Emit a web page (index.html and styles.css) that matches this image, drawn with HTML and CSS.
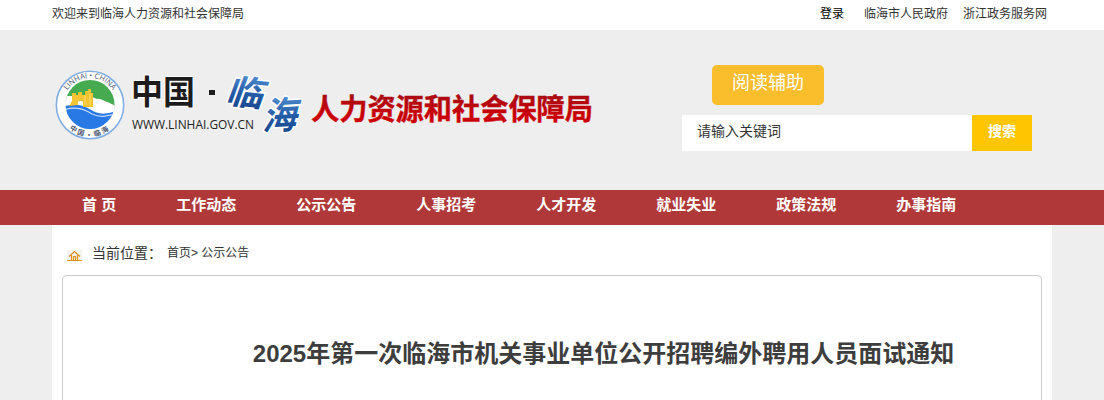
FILE: index.html
```html
<!DOCTYPE html>
<html lang="zh-CN">
<head>
  <meta charset="UTF-8">
  <title>2025年第一次临海市机关事业单位公开招聘编外聘用人员面试通知</title>
  <link rel="stylesheet" href="styles.css">
</head>
<body>
  <div class="topbar">
    <div class="wrap topbar-in">
      <span class="welcome">欢迎来到临海人力资源和社会保障局</span>
      <a class="login" href="#">登录</a>
      <a href="#">临海市人民政府</a>
      <a href="#">浙江政务服务网</a>
    </div>
  </div>

  <div class="header">
    <div class="wrap header-in">
      <svg class="logo" width="560" height="90" viewBox="0 0 560 90">
        <defs>
          <linearGradient id="brush" x1="0" y1="0" x2="0" y2="1">
            <stop offset="0.1" stop-color="#5b9bd9"/>
            <stop offset="0.55" stop-color="#245da8"/>
            <stop offset="1" stop-color="#123f84"/>
          </linearGradient>
          <linearGradient id="red" x1="0" y1="0" x2="0" y2="1">
            <stop offset="0.2" stop-color="#a80d12"/>
            <stop offset="0.7" stop-color="#cb0005"/>
          </linearGradient>
          <clipPath id="disc"><circle cx="38" cy="44.5" r="24.5"/></clipPath>
          <path id="arcTop" d="M11 45a27 27 0 0 1 54 0"/>
          <path id="arcBottom" d="M6.5 45a31.5 31.5 0 0 0 63 0"/>
        </defs>

        <!-- emblem -->
        <circle cx="38" cy="45" r="33.7" fill="#fff" stroke="#83aee4" stroke-width="1.6"/>
        <g clip-path="url(#disc)">
          <path d="M10 18h56v32c-9-3-17-2-23-8-9-5-20 2-33-1z" fill="#46aa50"/>
          <path d="M34 39c5-4 8-1 11 0 4-1 6 2 10 3s5 3 10 4v9H34z" fill="#fff"/>
          <path d="M10 36h10v12H10z" fill="#fff"/>
          <path d="M10 47c15-5 23-1 31 4 8 4 15 3 23 0v20H10z" fill="#2878e6"/>
          <path d="M10 50c15-4 22-1 30 4 9 4 15 2 23 0" fill="none" stroke="#c5dcfb" stroke-width="1.2"/>
        </g>
        <path d="M20 33h4v2h2v-3h4v3h3v-4h3v-2h3v4h2v14H31v-5q-3-3-5 0v3l-9 1 3-5z" fill="#f4c432"/>
        <path d="M33 36v9M38 34v11" stroke="#fbe06c" stroke-width="1"/>
        <text class="ring" text-anchor="middle"><textPath href="#arcTop" startOffset="50%">LINHAI • CHINA</textPath></text>
        <text class="ring ring-cn" text-anchor="middle"><textPath href="#arcBottom" startOffset="50%">中国·临海</textPath></text>

        <text class="china" x="79" y="44" textLength="64" lengthAdjust="spacingAndGlyphs">中国</text>
        <rect x="157" y="30" width="6" height="5" fill="#1c1c1c"/>
        <text class="site" x="80" y="69" textLength="122" lengthAdjust="spacingAndGlyphs">WWW.LINHAI.GOV.CN</text>
        <g class="brush">
          <text transform="translate(173 43) rotate(6) skewX(-14) scale(1 .93)">临</text>
          <text transform="translate(210 70) rotate(-3) skewX(-16) scale(.94 1.02)">海</text>
        </g>
        <text class="bureau" x="259" y="60" textLength="282" lengthAdjust="spacingAndGlyphs">人力资源和社会保障局</text>
      </svg>

      <div class="tools">
        <a class="assist" href="#">阅读辅助</a>
        <div class="search">
          <span class="keyword">请输入关键词</span>
          <a class="search-btn" href="#">搜索</a>
        </div>
      </div>
    </div>
  </div>

  <div class="nav">
    <div class="wrap nav-in">
      <a href="#">首 页</a>
      <a href="#">工作动态</a>
      <a href="#">公示公告</a>
      <a href="#">人事招考</a>
      <a href="#">人才开发</a>
      <a href="#">就业失业</a>
      <a href="#">政策法规</a>
      <a href="#">办事指南</a>
    </div>
  </div>

  <div class="wrap main">
    <div class="crumbs">
      <svg class="home" width="15" height="11" viewBox="0 0 15 11">
        <path fill="#f3f3f0" d="M0 0h15v11H0z"/>
        <path d="M2 6.5l5.5-5 5.5 5M4.5 5v5M10.5 5v5M6.5 10V6.5h2V10" fill="none" stroke="#dc921e" stroke-width="1.2"/>
        <path d="M0 10.5h15" stroke="#dc921e"/>
      </svg>
      <span class="here">当前位置：</span>
      <span class="path"><a href="#">首页</a>&gt; <a href="#">公示公告</a></span>
    </div>
    <div class="article">
      <h1>2025年第一次临海市机关事业单位公开招聘编外聘用人员面试通知</h1>
    </div>
  </div>
</body>
</html>
```
FILE: styles.css
```css
* {
  box-sizing: border-box;
}
body {
  margin: 0;
  background: #eee;
  color: #333;
  font: 12px "Liberation Sans", "Noto Sans CJK SC", sans-serif;
}
a {
  color: inherit;
  text-decoration: none;
}
.wrap {
  width: 1000px;
  margin: 0 auto;
}

/* top bar */
.topbar {
  height: 30px;
  background: #fff;
}
.topbar-in {
  display: flex;
  padding-right: 5px;
  line-height: 28px;
}
.welcome {
  margin-right: auto;
}
.topbar a {
  margin-left: 15px;
}
.topbar .login {
  margin-right: 5px;
  color: #000;
}

/* header */
.header {
  height: 160px;
}
.header-in {
  display: flex;
  justify-content: space-between;
  padding: 30px 20px 0 0;
}
.logo {
  display: block;
}
.ring {
  fill: #4b5672;
  font: 7.5px "Open Sans", sans-serif;
}
.ring-cn {
  font: bold 7px "Noto Sans CJK SC", sans-serif;
  letter-spacing: 2px;
}
.china {
  fill: #1c1c1c;
  stroke: #fff;
  stroke-width: 2px;
  paint-order: stroke;
  font: bold 33px "Noto Sans CJK SC", sans-serif;
}
.site {
  fill: #222;
  font: 12px "Open Sans", sans-serif;
}
.brush text {
  fill: url(#brush);
  stroke: #fff;
  stroke-width: 3px;
  stroke-linejoin: round;
  paint-order: stroke;
  font: bold 37px "Noto Sans CJK SC", sans-serif;
}
.bureau {
  fill: url(#red);
  stroke: url(#red);
  stroke-width: 0.4px;
  font: bold 29px "Noto Sans CJK SC", sans-serif;
}
.tools {
  width: 350px;
  padding-top: 5px;
}
.assist {
  display: block;
  width: 112px;
  height: 40px;
  margin: 0 0 10px 30px;
  border-radius: 5px;
  background: #fabd2c;
  color: #fff;
  font-size: 18px;
  line-height: 37px;
  text-align: center;
}
.search {
  display: flex;
  height: 36px;
  background: #fff;
  font-size: 14px;
  line-height: 32px;
}
.keyword {
  flex: 1;
  padding-left: 15px;
}
.search-btn {
  width: 60px;
  background: #ffc600;
  color: #fff;
  font-weight: bold;
  text-align: center;
}

/* navigation */
.nav {
  height: 35px;
  background: #b03839;
}
.nav-in {
  display: flex;
}
.nav a {
  padding: 0 30px;
  color: #fff;
  font-size: 15px;
  font-weight: bold;
  line-height: 30px;
}

/* content */
.main {
  height: 175px;
  padding: 0 10px;
  background: #fff;
}
.crumbs {
  display: flex;
  height: 50px;
  padding: 13px 0 0 5px;
  line-height: 30px;
}
.home {
  margin: 12px 10px 0 0;
}
.here {
  width: 75px;
  font-size: 14px;
  white-space: nowrap;
}
.path {
  line-height: 31px;
}
.article {
  height: 125px;
  padding: 60px 0 0 103px;
  border: 1px solid #ccc;
  border-bottom: none;
  border-radius: 5px 5px 0 0;
}
h1 {
  margin: 0;
  color: #3d3d3d;
  font-size: 24px;
  line-height: 36px;
  text-align: center;
}
```
